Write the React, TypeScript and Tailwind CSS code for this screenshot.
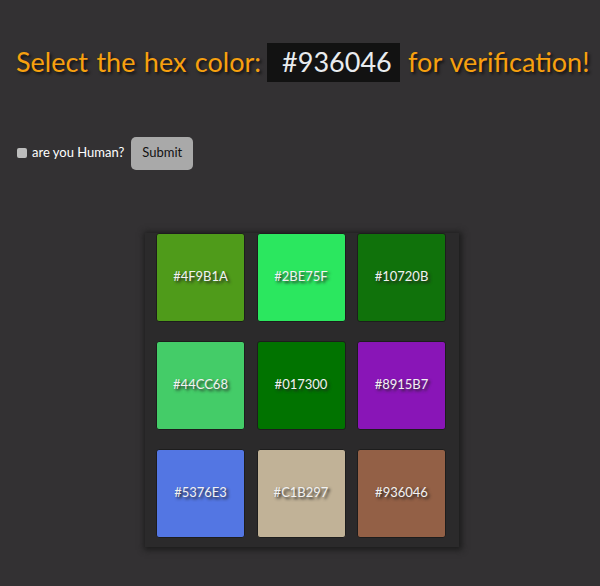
const colors = [
  '#4F9B1A',
  '#2BE75F',
  '#10720B',
  '#44CC68',
  '#017300',
  '#8915B7',
  '#5376E3',
  '#C1B297',
  '#936046',
]

export default function App() {
  return (
    <div className="min-h-[586px] w-[600px] overflow-hidden bg-[#333133] pt-[42px] font-['Lato',sans-serif]">
      {/* Title */}
      <h1 className="flex items-center whitespace-nowrap pl-[16px] text-[27px] text-[#f7a00f] [word-spacing:1.5px] [text-shadow:2px_2px_3px_#111]">
        <span>Select the hex color:</span>
        <span className="ml-[6px] flex h-[39px] w-[133px] shrink-0 items-center bg-[#121212] pl-[15px] text-[#e9ecef] [text-shadow:none]">
          #936046
        </span>
        <span className="ml-[8px]">for verification!</span>
      </h1>

      {/* Form */}
      <div className="mt-[54px] flex items-center pl-[17px]">
        <input
          type="checkbox"
          className="h-[10px] w-[10px] appearance-none rounded-[2px] bg-[#bdbdbd]"
        />
        <span className="ml-[5px] text-[13px] text-white">are you Human?</span>
        <button className="ml-[7px] h-[33px] w-[62px] rounded-[5px] bg-[#a9a9a9] text-[13px] text-[#111]">
          Submit
        </button>
      </div>

      {/* Color grid */}
      <div className="mt-[63px] flex justify-center">
        <div className="ml-[4px] grid w-[314px] grid-cols-[89px_89px_89px] gap-x-[11.5px] gap-y-[19px] bg-[#2b2a2b] pb-[9px] pl-[11px] shadow-[1px_1px_6px_2px_#1c1c1c]">
          {colors.map((color) => (
            <div
              key={color}
              className="flex h-[89px] w-[89px] items-center justify-center rounded-[3px] border border-[#1d1d1d] text-[13px] text-[#f2f2f2] [text-shadow:2px_2px_3px_#222]"
              style={{ backgroundColor: color }}
            >
              {color}
            </div>
          ))}
        </div>
      </div>
    </div>
  )
}
